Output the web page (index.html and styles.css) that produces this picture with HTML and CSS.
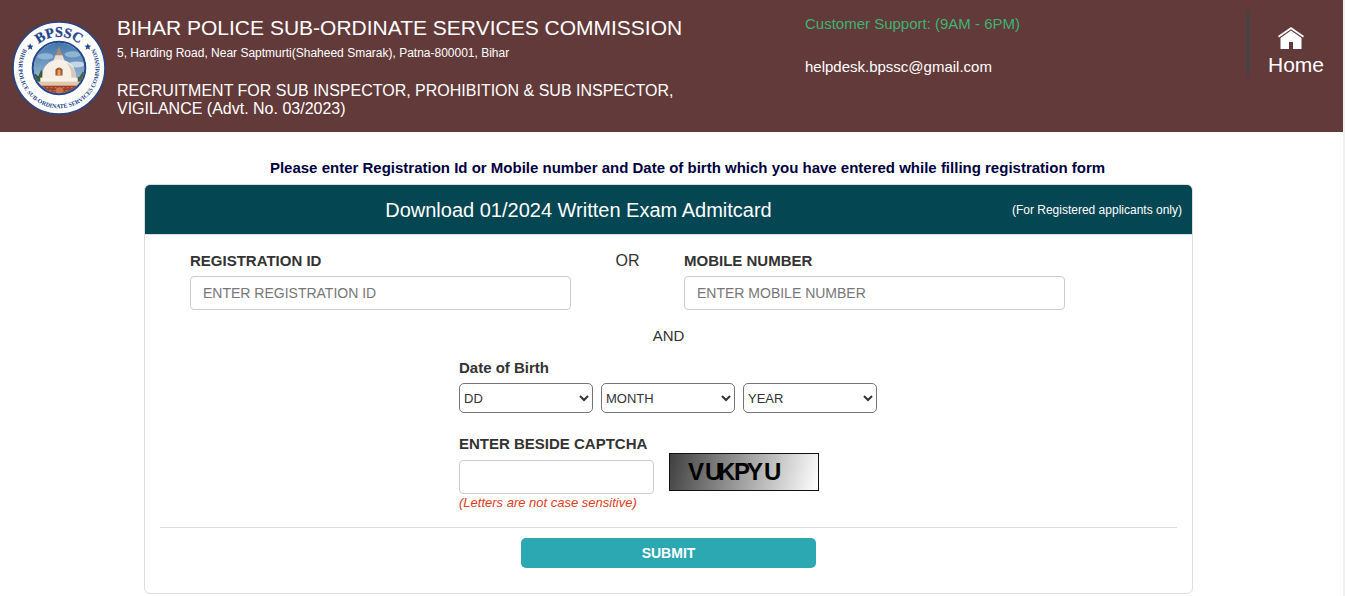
FILE: index.html
```html
<!DOCTYPE html>
<html lang="en">
<head>
    <meta charset="UTF-8">
    <meta name="viewport" content="width=device-width, initial-scale=1.0">
    <title>BPSSC - Download Admit Card</title>
    <link rel="stylesheet" href="styles.css">
</head>
<body>
    <!-- Header -->
    <header class="header">
        <svg class="logo" viewBox="0 0 93 93" role="img" aria-label="BPSSC logo">
            <defs>
                <path id="arcTop" d="M 15.5 46.5 A 31 31 0 0 1 77.5 46.5"/>
                <path id="arcBottom" d="M 11.5 27 A 40 40 0 1 0 81.5 27"/>
                <clipPath id="photo"><circle cx="46.5" cy="46.5" r="25"/></clipPath>
                <linearGradient id="sky" x1="0" y1="0" x2="0" y2="1">
                    <stop offset="0" stop-color="#3d74ab"/>
                    <stop offset="1" stop-color="#b9cfe2"/>
                </linearGradient>
            </defs>
            <circle cx="46.5" cy="46.5" r="45.5" fill="#fff" stroke="#24468a" stroke-width="1.6"/>
            <g clip-path="url(#photo)">
                <rect x="20" y="20" width="53" height="53" fill="url(#sky)"/>
                <ellipse cx="33" cy="35" rx="8" ry="3" fill="#8fb3d3"/>
                <ellipse cx="60" cy="33" rx="8" ry="3" fill="#8fb3d3"/>
                <ellipse cx="64" cy="43" rx="8" ry="3" fill="#c5d7e6"/>
                <path d="M20 61 v-7 l3 -2 3 3 3 -7 4 9 3 4z" fill="#3c5c38"/>
                <path d="M73 61 v-9 l-3 -2 -3 5 -5 2 -2 4z" fill="#48663d"/>
                <path d="M46.5 25 l1.200 4 1.800 5 h-6 l1.800 -5z" fill="#b88b64"/>
                <path d="M43 34 h7 l2 5 h-11z" fill="#e9dccb"/>
                <path d="M30 60 V54 C30 45 37 38 46.500 38 C56 38 63 45 63 54 V60z" fill="#f6efe6"/>
                <path d="M54 41 C60 45 63 49 63 54 V60 H58 C60 52 58 46 54 41z" fill="#d9c8b7"/>
                <path d="M43 54 v-6 q3.500 -4 7 0 v6z" fill="#a5523a"/>
                <path d="M45 54 v-5 q1.500 -2 3 0 v5z" fill="#e5a956"/>
                <rect x="28" y="56" width="37" height="5" fill="#f8f1e5"/>
                <rect x="24" y="60" width="46" height="5" fill="#dfc9ae"/>
                <rect x="20" y="64" width="53" height="10" fill="#9e3e2c"/>
                <path d="M22 66 h50 M25 69 h44" stroke="#d98850" stroke-width="1" stroke-dasharray="2 2"/>
                <path d="M43 72 l1 -6 h6 l1 6z" fill="#cc7547"/>
            </g>
            <circle cx="46.5" cy="46.5" r="26" fill="none" stroke="#24468a" stroke-width="2"/>
            <text class="logo-name" text-anchor="middle"><textPath href="#arcTop" startOffset="50%">BPSSC</textPath></text>
            <text class="logo-ring" text-anchor="middle"><textPath href="#arcBottom" startOffset="50%">BIHAR POLICE SUB-ORDINATE SERVICES COMMISSION</textPath></text>
            <path id="star" d="M18 22 l.9 2.300 2.400 .1 -1.800 1.600 .6 2.400 -2.100 -1.300 -2.100 1.300 .6 -2.400 -1.800 -1.600 2.400 -.1z" fill="#24468a"/>
            <use href="#star" x="57"/>
        </svg>

        <div class="org">
            <h1>BIHAR POLICE SUB-ORDINATE SERVICES COMMISSION</h1>
            <p class="address">5, Harding Road, Near Saptmurti(Shaheed Smarak), Patna-800001, Bihar</p>
            <p class="advt">RECRUITMENT FOR SUB INSPECTOR, PROHIBITION &amp; SUB INSPECTOR, VIGILANCE (Advt. No. 03/2023)</p>
        </div>

        <div class="support">
            <p class="support-time">Customer Support: (9AM - 6PM)</p>
            <p class="support-mail">helpdesk.bpssc@gmail.com</p>
        </div>

        <nav class="nav">
            <a href="#" class="home">
                <svg class="home-icon" viewBox="0 0 28 24" aria-hidden="true">
                    <path d="M14 1 L27 10 L26 11.500 L14 3.300 L2 11.500 L1 10z" fill="#fff"/>
                    <path d="M14 4.600 L24.500 12 V23 H16 V16 H12 V23 H3.500 V12z" fill="#fff"/>
                </svg>
                Home
            </a>
        </nav>
    </header>

    <!-- Admit card form -->
    <main class="main">
        <p class="notice">Please enter Registration Id or Mobile number and Date of birth which you have entered while filling registration form</p>

        <section class="panel">
            <div class="panel-heading">
                <h2>Download 01/2024 Written Exam Admitcard</h2>
                <span class="panel-note">(For Registered applicants only)</span>
            </div>

            <form class="panel-body" onsubmit="return false">
                <div class="id-row">
                    <div class="field">
                        <label for="regId">REGISTRATION ID</label>
                        <input type="text" id="regId" class="form-control" placeholder="ENTER REGISTRATION ID">
                    </div>
                    <span class="or">OR</span>
                    <div class="field">
                        <label for="mobile">MOBILE NUMBER</label>
                        <input type="text" id="mobile" class="form-control" placeholder="ENTER MOBILE NUMBER">
                    </div>
                </div>

                <p class="and">AND</p>

                <div class="details">
                    <div class="field">
                        <label for="day">Date of Birth</label>
                        <div class="dob">
                            <select id="day"><option>DD</option></select>
                            <select id="month" aria-label="Month"><option>MONTH</option></select>
                            <select id="year" aria-label="Year"><option>YEAR</option></select>
                        </div>
                    </div>

                    <div class="captcha-row">
                        <div class="field captcha-field">
                            <label for="captcha">ENTER BESIDE CAPTCHA</label>
                            <input type="text" id="captcha" class="form-control">
                            <small class="hint">(Letters are not case sensitive)</small>
                        </div>
                        <svg class="captcha" viewBox="0 0 148 36" role="img" aria-label="Captcha">
                            <text y="26" x="18 35 48 64 77 94">VUKPYU</text>
                        </svg>
                    </div>
                </div>

                <div class="actions">
                    <button type="submit" class="submit">SUBMIT</button>
                </div>
            </form>
        </section>
    </main>
</body>
</html>
```
FILE: styles.css
```css
* {
    box-sizing: border-box;
}

body {
    margin: 0;
    font-family: "Liberation Sans", Arial, sans-serif;
    font-size: 14px;
    line-height: 20px;
    color: #333;
    background-color: #fff;
    border-right: 2px solid #f0f0f0;
}

h1, h2, p {
    margin: 0;
    font-weight: normal;
}

/* Header */
.header {
    display: flex;
    align-items: flex-start;
    min-height: 132px;
    padding: 12px 16px 12px 12px;
    background-color: #633a3a;
    color: #fff;
}

.logo {
    flex: none;
    width: 94px;
    height: 94px;
    margin-top: 9px;
}

.logo-name {
    font: bold 14px "Liberation Serif", serif;
    fill: #24468a;
    stroke: #24468a;
    stroke-width: 0.3px;
}

.logo-ring {
    font: bold 6px "Liberation Serif", serif;
    fill: #24468a;
}

.org {
    flex: 1;
    padding: 4px 96px 0 11px;
}

.org h1 {
    font-size: 21px;
    line-height: 24px;
    white-space: nowrap;
}

.address {
    margin-top: 4px;
    font-size: 12px;
    line-height: 18px;
}

.advt {
    margin-top: 20px;
    font-size: 16px;
    line-height: 18px;
}

.support {
    width: 442px;
    font-size: 15px;
    line-height: 24px;
}

.support-time {
    color: #3cb371;
}

.support-mail {
    margin-top: 19px;
}

.nav {
    height: 64px;
    padding: 14px 3px 0 19px;
    border-left: 2px solid #334850;
}

.home {
    display: flex;
    flex-direction: column;
    font-size: 21px;
    line-height: 30px;
    color: #fff;
    text-decoration: none;
}

.home-icon {
    width: 28px;
    height: 24px;
    margin-left: 9px;
}

/* Form panel */
.main {
    padding: 26px 150px 2px 144px;
}

.notice {
    padding-left: 38px;
    font-size: 15px;
    font-weight: bold;
    text-align: center;
    color: #000040;
}

.panel {
    margin-top: 6px;
    border: 1px solid #ddd;
    border-radius: 6px;
    overflow: hidden;
}

.panel-heading {
    display: flex;
    align-items: center;
    height: 50px;
    padding-right: 10px;
    background-color: #044652;
    border-bottom: 1px solid #ddd;
    color: #fff;
}

.panel-heading h2 {
    flex: 1;
    font-size: 20px;
    text-align: center;
}

.panel-note {
    font-size: 12px;
}

.panel-body {
    padding: 16px 15px 25px;
}

.field {
    display: flex;
    flex-direction: column;
}

label {
    margin-bottom: 5px;
    font-size: 15px;
    font-weight: bold;
}

.form-control {
    width: 100%;
    height: 34px;
    padding: 6px 12px;
    font: 14px "Liberation Sans", Arial, sans-serif;
    color: #555;
    border: 1px solid #ccc;
    border-radius: 4px;
}

.form-control::placeholder {
    color: #777;
}

.id-row {
    display: grid;
    grid-template-columns: 1fr 113px 1fr;
    padding: 0 112px 0 30px;
}

.or {
    font-size: 16px;
    text-align: center;
}

.and {
    margin: 16px 0 12px;
    font-size: 15px;
    text-align: center;
}

.details {
    width: 419px;
    margin: 0 auto;
}

.dob {
    display: grid;
    grid-template-columns: repeat(3, 134px);
    gap: 8px;
}

.dob select {
    height: 30px;
    font: 13px "Liberation Sans", Arial, sans-serif;
    color: #333;
    background-color: #fff;
    border: 1px solid #767676;
    border-radius: 5px;
}

.captcha-row {
    display: flex;
    align-items: flex-start;
    gap: 15px;
    margin-top: 21px;
}

.captcha-field {
    width: 195px;
}

.captcha-field label {
    margin-bottom: 6px;
}

.hint {
    font-size: 13px;
    line-height: 18px;
    font-style: italic;
    color: #e03c1a;
}

.captcha {
    width: 150px;
    height: 38px;
    margin-top: 19px;
    border: 1px solid #111;
    background: linear-gradient(105deg, #404040, #fff);
}

.captcha text {
    font: bold 24px "Liberation Sans", Arial, sans-serif;
}

.actions {
    margin-top: 15px;
    padding-top: 10px;
    border-top: 1px solid #ddd;
    text-align: center;
}

.submit {
    width: 295px;
    height: 30px;
    font: bold 14px "Liberation Sans", Arial, sans-serif;
    color: #fff;
    background-color: #2ca8b2;
    border: none;
    border-radius: 5px;
    cursor: pointer;
}
```
